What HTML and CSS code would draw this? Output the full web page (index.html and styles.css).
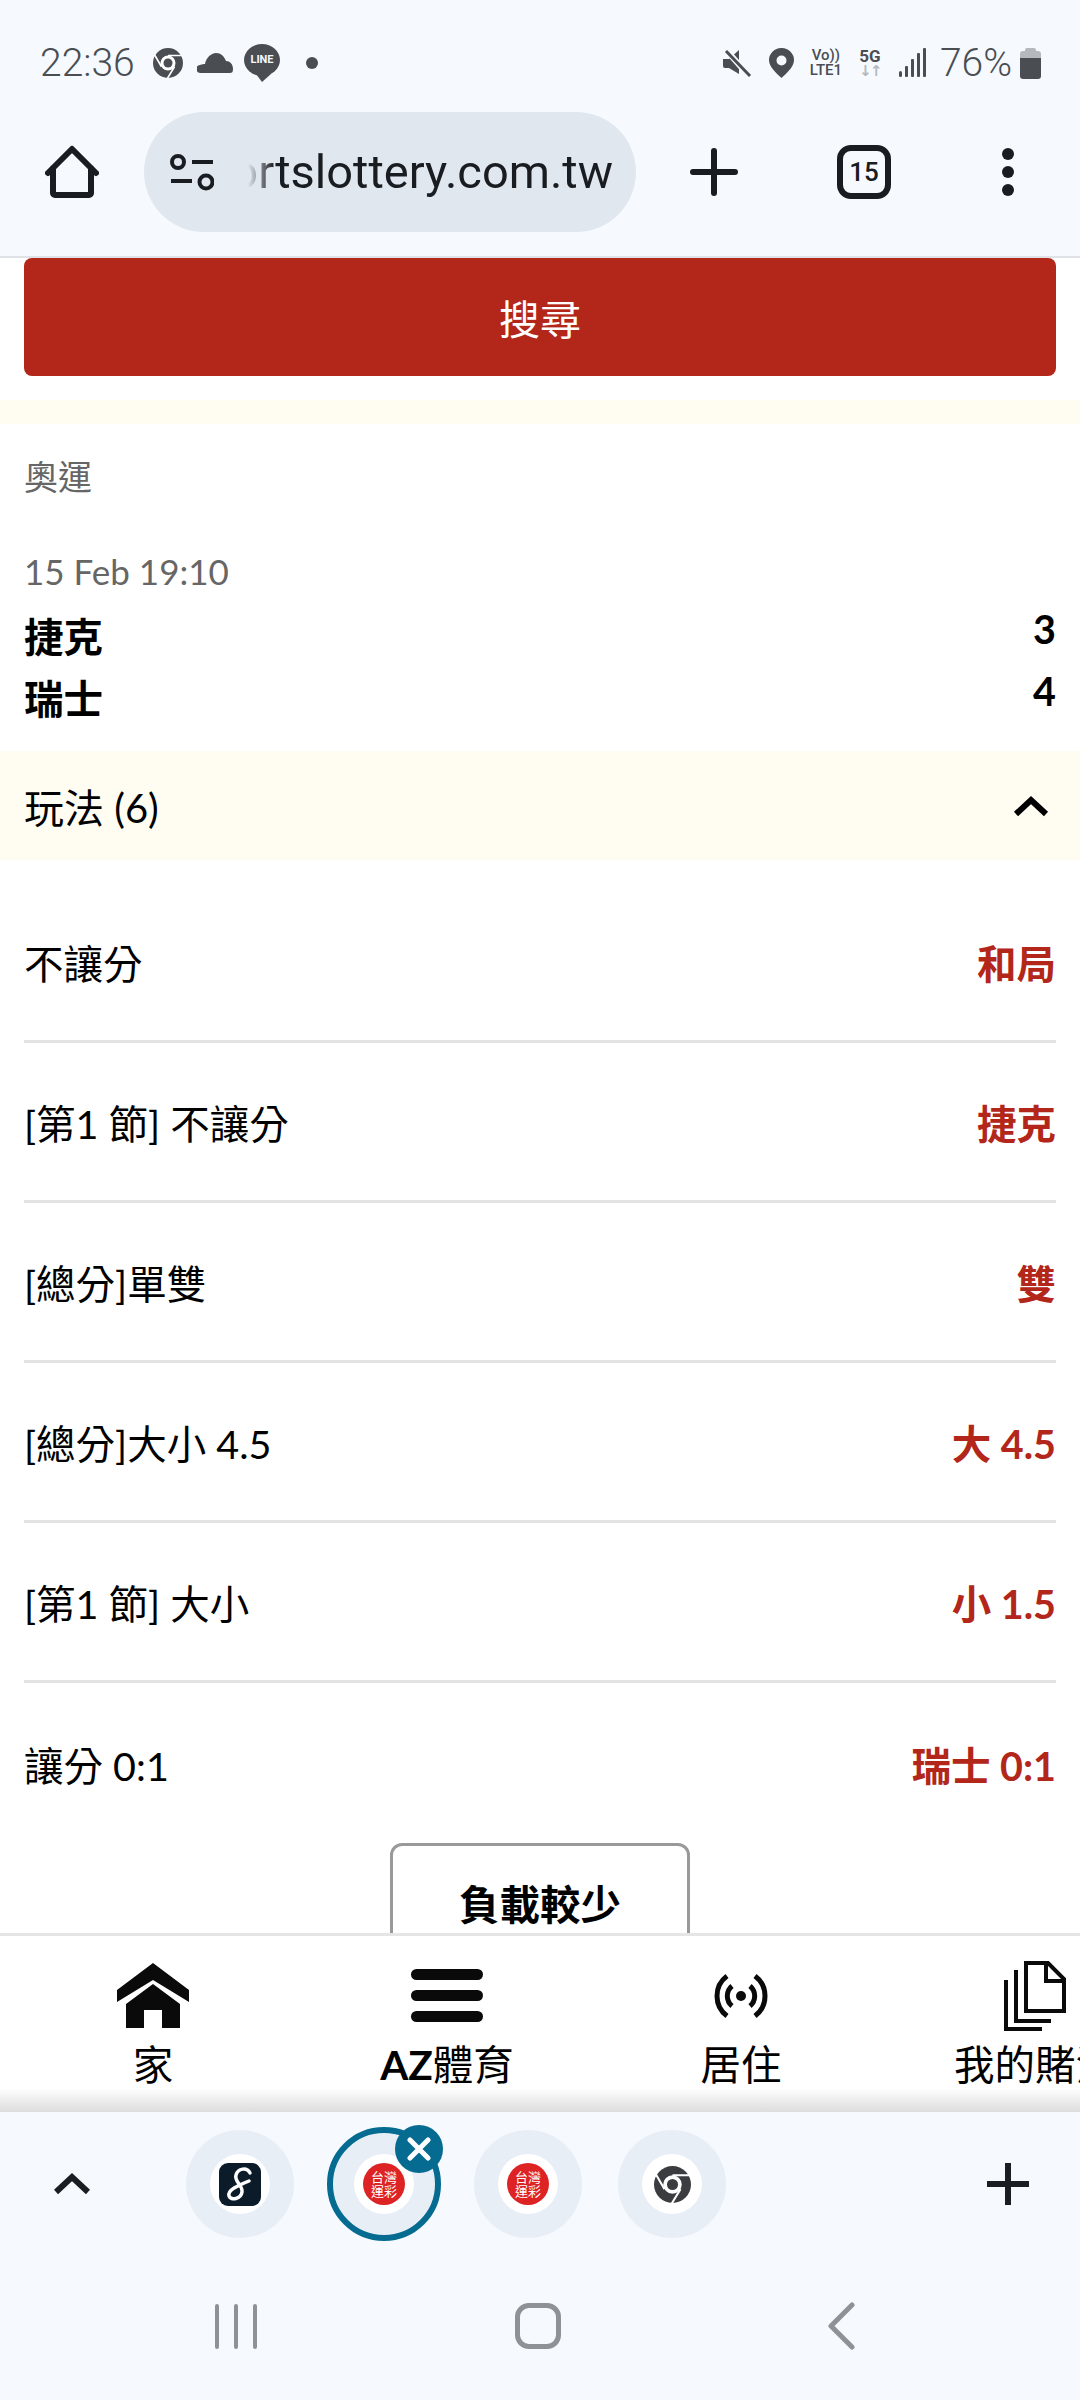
FILE: index.html
```html
<!DOCTYPE html>
<html lang="zh-Hant">
<head>
  <meta charset="UTF-8" />
  <title>運彩</title>
  <link rel="stylesheet" href="styles.css">
</head>
<body>
  <svg width="0" height="0" class="defs">
    <symbol id="chrome" viewBox="0 0 24 24">
      <circle cx="12" cy="12" r="12" fill="currentColor"/>
      <circle cx="12" cy="12" r="6" fill="#fff"/>
      <circle cx="12" cy="12" r="3.6" fill="currentColor"/>
      <path d="M12 6H23.5M17.2 15 11.4 24.5M6.8 15 1 5" stroke="#fff" stroke-width="1.3" fill="none"/>
    </symbol>
  </svg>

  <!-- status bar -->
  <div class="status-bar">
    <div class="status-left">
      <span class="clock">22:36</span>
      <svg class="st-chrome" width="30" height="30"><use href="#chrome"/></svg>
      <svg class="st-cloud" width="36" height="22" viewBox="0 0 36 22"><path d="M4 21a4 4 0 0 1-1-8c2-1 4-1 5-1 1-6 6-11 11-11 5 0 8 3 10 8 4 0 7 3 7 8 0 3-1 4-3 4Z" fill="currentColor"/></svg>
      <span class="st-line">
        <svg width="36" height="38" viewBox="0 0 36 38"><ellipse cx="18" cy="16" rx="18" ry="16" fill="currentColor"/><path d="M12 30h15l-9 8Z" fill="currentColor"/></svg>
        <span class="st-line-text">LINE</span>
      </span>
      <span class="st-dot"></span>
    </div>
    <div class="status-right">
      <svg width="30" height="30" viewBox="0 0 30 30"><path d="M1 11h6l10-9v24l-10-6H3a2 2 0 0 1-2-2Z" fill="currentColor"/><path d="M5 3 28 29" stroke="#f6faff" stroke-width="6"/><path d="M4 3 28 28" stroke="currentColor" stroke-width="3"/></svg>
      <svg class="st-pin" width="25" height="30" viewBox="0 0 25 30"><path fill-rule="evenodd" d="M12.500 0A12.300 12.300 0 0 1 25 12.300C25 19 17 26 12.500 30 8 26 0 19 0 12.300A12.300 12.300 0 0 1 12.500 0Zm0 7.500a5 5 0 1 0 0 10 5 5 0 0 0 0-10Z" fill="currentColor"/></svg>
      <span class="st-volte"><span>Vo))</span><span>LTE1</span></span>
      <span class="st-fiveg"><span>5G</span><span class="st-arrows">↓↑</span></span>
      <svg class="st-signal" width="27" height="30" viewBox="0 0 27 30"><g fill="currentColor"><rect x="0" y="23" width="3" height="6" rx="1.500"/><rect x="6" y="18" width="3" height="11" rx="1"/><rect x="12" y="11" width="3" height="18" rx="1"/><rect x="18" y="5" width="3" height="24" rx="1"/><rect x="24" y="0" width="3" height="29" rx="1"/></g></svg>
      <span class="st-battery-text">76%</span>
      <span class="battery"><span class="battery-cap"></span><span class="battery-body"></span></span>
    </div>
  </div>

  <!-- chrome toolbar -->
  <div class="toolbar">
    <svg class="tb-home" width="54" height="54" viewBox="0 0 54 54"><path d="M3 28 27 4l24 24M8 23v25a2 2 0 0 0 2 2h34a2 2 0 0 0 2-2V23" fill="none" stroke="currentColor" stroke-width="6" stroke-linecap="round" stroke-linejoin="round"/></svg>
    <div class="url-pill">
      <svg width="44" height="38" viewBox="0 0 44 38"><g fill="none" stroke="currentColor" stroke-width="4"><circle cx="8" cy="9" r="6"/><circle cx="36" cy="29" r="6.500"/><path d="M22 9h21M1 28h21"/></g></svg>
      <div class="url-clip"><span class="url-text">sportslottery.com.tw</span></div>
    </div>
    <svg class="tb-plus" width="48" height="48" viewBox="0 0 48 48"><path d="M24 3v42M3 24h42" stroke="currentColor" stroke-width="6" stroke-linecap="round"/></svg>
    <div class="tab-count">15</div>
    <div class="tb-more"><span></span><span></span><span></span></div>
  </div>

  <!-- page content -->
  <main class="content">
    <div class="search-btn">搜尋</div>
    <div class="strip"></div>

    <div class="league">奧運</div>
    <div class="match-date">15 Feb 19:10</div>
    <div class="team-row"><span class="team-name">捷克</span><span class="team-score">3</span></div>
    <div class="team-row"><span class="team-name">瑞士</span><span class="team-score">4</span></div>

    <div class="markets-head">
      <span>玩法 (6)</span>
      <svg width="36" height="22" viewBox="0 0 36 22"><path d="M3 19 18 5l15 14" fill="none" stroke="#000" stroke-width="6"/></svg>
    </div>

    <div class="market-list">
      <div class="market"><span>不讓分</span><b>和局</b></div>
      <div class="market"><span>[第1 節] 不讓分</span><b>捷克</b></div>
      <div class="market"><span>[總分]單雙</span><b>雙</b></div>
      <div class="market"><span>[總分]大小 4.5</span><b>大 4.5</b></div>
      <div class="market"><span>[第1 節] 大小</span><b>小 1.5</b></div>
      <div class="market"><span>讓分 0:1</span><b>瑞士 0:1</b></div>
    </div>

    <div class="load-less">負載較少</div>
  </main>

  <!-- site bottom nav -->
  <nav class="site-nav">
    <div class="nav-item">
      <div class="nav-icon"><svg width="72" height="66" viewBox="0 0 72 66"><path d="M36 0 72 27V39L36 17 0 39V27ZM36 21 63 41V65H45V47H27V65H9V41Z" fill="#0a0a0a"/></svg></div>
      <div class="nav-label">家</div>
    </div>
    <div class="nav-item">
      <div class="nav-icon"><div class="burger"><span></span><span></span><span></span></div></div>
      <div class="nav-label"><b>AZ</b>體育</div>
    </div>
    <div class="nav-item">
      <div class="nav-icon"><svg width="54" height="44" viewBox="0 0 54 44"><circle cx="27" cy="22" r="5" fill="#0a0a0a"/><path d="M13 2A25 25 0 0 0 13 42M41 2A25 25 0 0 1 41 42M18 12A13 13 0 0 0 18 32M36 12A13 13 0 0 1 36 32" fill="none" stroke="#0a0a0a" stroke-width="5"/></svg></div>
      <div class="nav-label">居住</div>
    </div>
    <div class="nav-item">
      <div class="nav-icon"><svg width="62" height="70" viewBox="0 0 62 70"><path d="M22 2H44L60 18V50H22ZM42 2V20H60M12 9V60H47M2 19V68H38" fill="none" stroke="#0a0a0a" stroke-width="4"/></svg></div>
      <div class="nav-label">我的賭注</div>
    </div>
  </nav>

  <!-- tab groups and system nav -->
  <footer class="browser-bottom">
    <div class="tab-strip">
      <svg class="strip-chevron" width="36" height="24" viewBox="0 0 36 24"><path d="M2 20 18 5l16 15" fill="none" stroke="#1a1d21" stroke-width="6"/></svg>
      <div class="tab-groups">
        <div class="tab-circle">
          <div class="tab-inner">
            <svg width="42" height="43" viewBox="0 0 42 43"><rect width="42" height="43" rx="9" fill="#0c1b2a"/><path d="M31 10C28 4 19 5 17 12 15 19 24 22 23 29 22 36 12 38 10 33 8 27 20 22 30 18" fill="none" stroke="#fff" stroke-width="3.500" stroke-linecap="round"/></svg>
          </div>
        </div>
        <div class="tab-circle active">
          <div class="tab-inner"><span class="logo-lottery"><span>台灣</span><span>運彩</span></span></div>
          <span class="tab-close"><svg width="24" height="24" viewBox="0 0 24 24"><path d="M3 3 21 21M21 3 3 21" stroke="#fff" stroke-width="5" stroke-linecap="round"/></svg></span>
        </div>
        <div class="tab-circle">
          <div class="tab-inner"><span class="logo-lottery"><span>台灣</span><span>運彩</span></span></div>
        </div>
        <div class="tab-circle">
          <div class="tab-inner"><svg class="tab-chrome" width="37" height="37"><use href="#chrome"/></svg></div>
        </div>
      </div>
      <svg class="strip-plus" width="42" height="42" viewBox="0 0 42 42"><path d="M21 0v42M0 21h42" stroke="#1a1d21" stroke-width="6"/></svg>
    </div>
    <div class="system-nav">
      <div class="sys-recent"><span></span><span></span><span></span></div>
      <div class="sys-home"></div>
      <svg width="28" height="48" viewBox="0 0 28 48"><path d="M25 3 4 24l21 21" fill="none" stroke="#8e9296" stroke-width="5" stroke-linecap="round" stroke-linejoin="round"/></svg>
    </div>
  </footer>
</body>
</html>
```

FILE: styles.css
```css
* {
  box-sizing: border-box;
}

body {
  margin: 0;
  width: 1080px;
  height: 2400px;
  overflow: hidden;
  display: flex;
  flex-direction: column;
  background: #f6faff;
  font-family: Lato, "Noto Sans CJK TC", sans-serif;
  color: #000;
}

.defs {
  position: absolute;
}

/* status bar */
.status-bar {
  height: 100px;
  flex: none;
  padding: 43px 39px 0 40px;
  display: flex;
  justify-content: space-between;
  align-items: flex-start;
  color: #4a4e53;
}

.status-left,
.status-right {
  display: flex;
  align-items: center;
  height: 40px;
}

.clock {
  font: 300 39px Roboto, sans-serif;
  width: 113px;
}

.st-cloud {
  margin-left: 14px;
}

.st-line {
  position: relative;
  width: 36px;
  height: 38px;
  margin-left: 11px;
}

.st-line svg {
  display: block;
}

.st-line-text {
  position: absolute;
  top: 9px;
  left: 0;
  width: 36px;
  text-align: center;
  color: #f6faff;
  font: 700 11px Roboto, sans-serif;
}

.st-dot {
  width: 12px;
  height: 12px;
  border-radius: 50%;
  background: currentColor;
  margin-left: 26px;
}

.st-pin {
  margin-left: 17px;
}

.st-volte {
  display: flex;
  flex-direction: column;
  align-items: center;
  margin-left: 13px;
  width: 38px;
  font: 500 15px/15px Roboto, sans-serif;
}

.st-fiveg {
  display: flex;
  flex-direction: column;
  align-items: center;
  margin-left: 12px;
  width: 26px;
  font: 700 17px/16px Roboto, sans-serif;
}

.st-arrows {
  color: #b5b9bd;
  font: 700 15px/15px "DejaVu Sans", sans-serif;
  letter-spacing: -2px;
}

.st-signal {
  margin-left: 16px;
}

.st-battery-text {
  font: 300 39px Roboto, sans-serif;
  margin-left: 14px;
}

.battery {
  display: flex;
  flex-direction: column;
  align-items: center;
  width: 21px;
  margin-left: 8px;
}

.battery-cap {
  width: 11px;
  height: 3px;
  background: #b5b9bd;
  border-radius: 2px 2px 0 0;
}

.battery-body {
  width: 21px;
  height: 28px;
  border-radius: 3px;
  background: linear-gradient(#b5b9bd 0 7px, #4a4e53 7px);
}

/* toolbar */
.toolbar {
  height: 158px;
  flex: none;
  padding: 12px 0 25px 45px;
  display: flex;
  align-items: center;
  color: #191c20;
  border-bottom: 2px solid #dfe2e6;
}

.url-pill {
  width: 492px;
  height: 120px;
  margin-left: 45px;
  padding: 0 23px 0 26px;
  border-radius: 60px;
  background: #e1e7ef;
  display: flex;
  align-items: center;
  gap: 26px;
}

.url-pill svg {
  flex: none;
}

.url-clip {
  flex: 1;
  min-width: 0;
  overflow: hidden;
  display: flex;
  justify-content: flex-end;
  -webkit-mask-image: linear-gradient(to right, transparent 0, transparent 8px, #000 34px);
  mask-image: linear-gradient(to right, transparent 0, transparent 8px, #000 34px);
}

.url-text {
  font: 400 47px Roboto, sans-serif;
  white-space: nowrap;
  flex: none;
}

.tb-plus {
  margin-left: 54px;
}

.tab-count {
  width: 54px;
  height: 54px;
  margin-left: 99px;
  border: 6px solid currentColor;
  border-radius: 14px;
  display: flex;
  align-items: center;
  justify-content: center;
  font: 500 26px Roboto, sans-serif;
}

.tb-more {
  margin-left: 111px;
  display: flex;
  flex-direction: column;
  gap: 6px;
}

.tb-more span {
  width: 12px;
  height: 12px;
  border-radius: 50%;
  background: currentColor;
}

/* content */
.content {
  flex: 1;
  min-height: 0;
  overflow: hidden;
  background: #fff;
}

.search-btn {
  height: 118px;
  margin: 0 24px;
  border-radius: 8px;
  background: #b3261a;
  color: #fff;
  font-size: 41px;
  display: flex;
  align-items: center;
  justify-content: center;
}

.strip {
  height: 24px;
  margin-top: 24px;
  background: #fffdf2;
}

.league {
  margin: 35px 24px 0;
  font-size: 34px;
  line-height: 36px;
  color: #666;
}

.match-date {
  margin: 56px 24px 0;
  font-size: 35px;
  line-height: 40px;
  color: #666;
}

.team-row {
  display: flex;
  justify-content: space-between;
  align-items: flex-start;
  margin: 0 24px;
  height: 62px;
  font-weight: 700;
  font-size: 39.5px;
}

.match-date + .team-row {
  margin-top: 15px;
}

.team-name {
  line-height: 62px;
}

.team-score {
  line-height: 46px;
}

.markets-head {
  height: 109px;
  margin-top: 21px;
  padding: 0 31px 0 24px;
  background: #fffdf2;
  display: flex;
  align-items: center;
  justify-content: space-between;
  font-size: 40px;
}

.market-list {
  margin: 23px 24px 0;
}

.market {
  height: 160px;
  border-bottom: 3px solid #e3e3e3;
  display: flex;
  align-items: center;
  justify-content: space-between;
  font-size: 39.5px;
}

.market:last-child {
  border-bottom: none;
}

.market b {
  color: #b3261a;
  font-weight: 700;
}

.load-less {
  width: 300px;
  height: 140px;
  margin: 0 auto;
  padding-top: 27px;
  border: 3px solid #999;
  border-radius: 12px;
  text-align: center;
  font-size: 40.5px;
  font-weight: 700;
}

/* site nav */
.site-nav {
  height: 179px;
  flex: none;
  padding-left: 6px;
  border-top: 3px solid #e5e5e5;
  background: linear-gradient(#fff 152px, #dcdcdc 176px);
  display: flex;
  overflow: hidden;
}

.nav-item {
  flex: 0 0 294px;
  display: flex;
  flex-direction: column;
  align-items: center;
}

.nav-icon {
  height: 102px;
  padding-top: 17px;
  display: flex;
  align-items: center;
}

.nav-label {
  font-size: 40.5px;
  line-height: 54px;
  white-space: nowrap;
}

.burger {
  display: flex;
  flex-direction: column;
  gap: 10px;
}

.burger span {
  display: block;
  width: 72px;
  height: 11px;
  border-radius: 6px;
  background: #0a0a0a;
}

/* browser bottom */
.browser-bottom {
  height: 288px;
  flex: none;
}

.tab-strip {
  height: 144px;
  padding: 0 51px 0 54px;
  display: flex;
  align-items: center;
}

.tab-groups {
  display: flex;
  gap: 36px;
  margin-left: 96px;
}

.strip-plus {
  margin-left: auto;
}

.tab-circle {
  position: relative;
  width: 108px;
  height: 108px;
  border-radius: 50%;
  background: #e8eef6;
  display: flex;
  align-items: center;
  justify-content: center;
}

.tab-circle.active {
  outline: 6px solid #056b91;
  outline-offset: -3px;
}

.tab-inner {
  width: 60px;
  height: 60px;
  border-radius: 50%;
  background: #fff;
  display: flex;
  align-items: center;
  justify-content: center;
}

.logo-lottery {
  width: 42px;
  height: 42px;
  border-radius: 50%;
  background: #dd2323;
  color: #fff;
  font-size: 13px;
  line-height: 14px;
  display: flex;
  flex-direction: column;
  align-items: center;
  justify-content: center;
}

.tab-chrome {
  color: #3a3c40;
}

.tab-close {
  position: absolute;
  top: -5px;
  right: -5px;
  width: 48px;
  height: 48px;
  border-radius: 50%;
  background: #056b91;
  display: flex;
  align-items: center;
  justify-content: center;
}

.system-nav {
  height: 144px;
  padding: 0 225px 4px 215px;
  display: flex;
  align-items: center;
  justify-content: space-between;
}

.sys-recent {
  display: flex;
  gap: 15px;
}

.sys-recent span {
  width: 4px;
  height: 45px;
  border-radius: 2px;
  background: #8e9296;
}

.sys-home {
  width: 46px;
  height: 46px;
  margin-right: 8px;
  border: 5px solid #8e9296;
  border-radius: 14px;
}
```
